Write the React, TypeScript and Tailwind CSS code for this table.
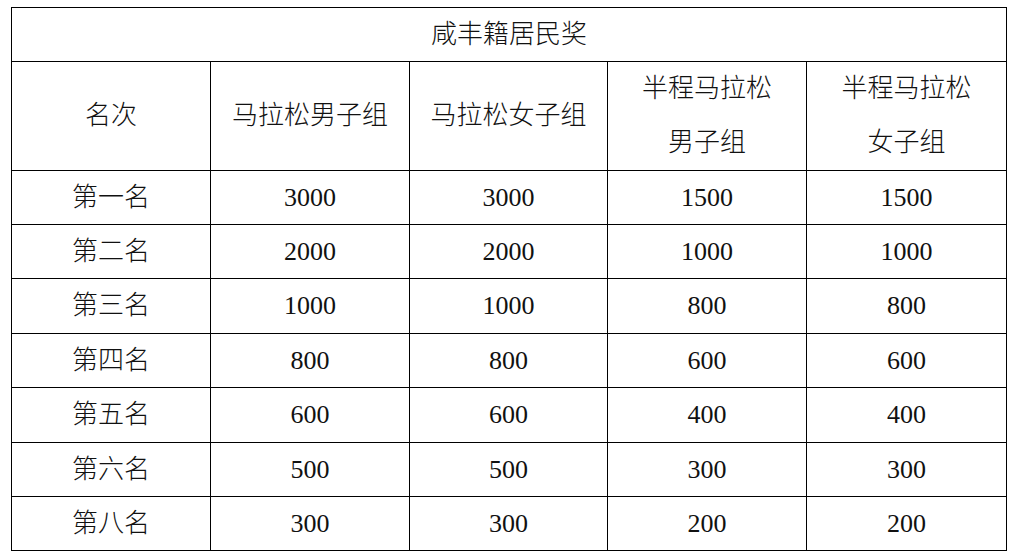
const ROWS: [string, string, string, string, string][] = [
  ["第一名", "3000", "3000", "1500", "1500"],
  ["第二名", "2000", "2000", "1000", "1000"],
  ["第三名", "1000", "1000", "800", "800"],
  ["第四名", "800", "800", "600", "600"],
  ["第五名", "600", "600", "400", "400"],
  ["第六名", "500", "500", "300", "300"],
  ["第八名", "300", "300", "200", "200"],
];

const ROW_H = ["h-[54px]", "h-[54px]", "h-[55px]", "h-[54px]", "h-[55px]", "h-[54px]", "h-[54px]"];

const cell = "border border-black text-center align-middle p-0 leading-[40px]";
const cell2 = "border border-black text-center align-middle p-0 leading-[54px]";

export default function App() {
  return (
    <div className="w-[1016px] h-[556px] bg-white pl-[11px] pt-[7px] text-[26px] font-light text-[#111] font-['Liberation_Serif','Noto_Sans_CJK_SC',serif]">
      <table className="w-[995px] border-collapse table-fixed">
        <colgroup>
          <col className="w-[199px]" />
          <col className="w-[199px]" />
          <col className="w-[198px]" />
          <col className="w-[199px]" />
          <col className="w-[200px]" />
        </colgroup>
        <tbody>
          <tr className="h-[54px]">
            <td colSpan={5} className={cell}>
              咸丰籍居民奖
            </td>
          </tr>
          <tr className="h-[108px]">
            <td className={cell}>名次</td>
            <td className={cell}>马拉松男子组</td>
            <td className={cell}>马拉松女子组</td>
            <td className={cell2}>
              半程马拉松
              <br />
              男子组
            </td>
            <td className={cell2}>
              半程马拉松
              <br />
              女子组
            </td>
          </tr>
          {ROWS.map((r, i) => (
            <tr key={r[0]} className={ROW_H[i]}>
              {r.map((v, j) => (
                <td key={j} className={cell}>
                  {v}
                </td>
              ))}
            </tr>
          ))}
        </tbody>
      </table>
    </div>
  );
}
